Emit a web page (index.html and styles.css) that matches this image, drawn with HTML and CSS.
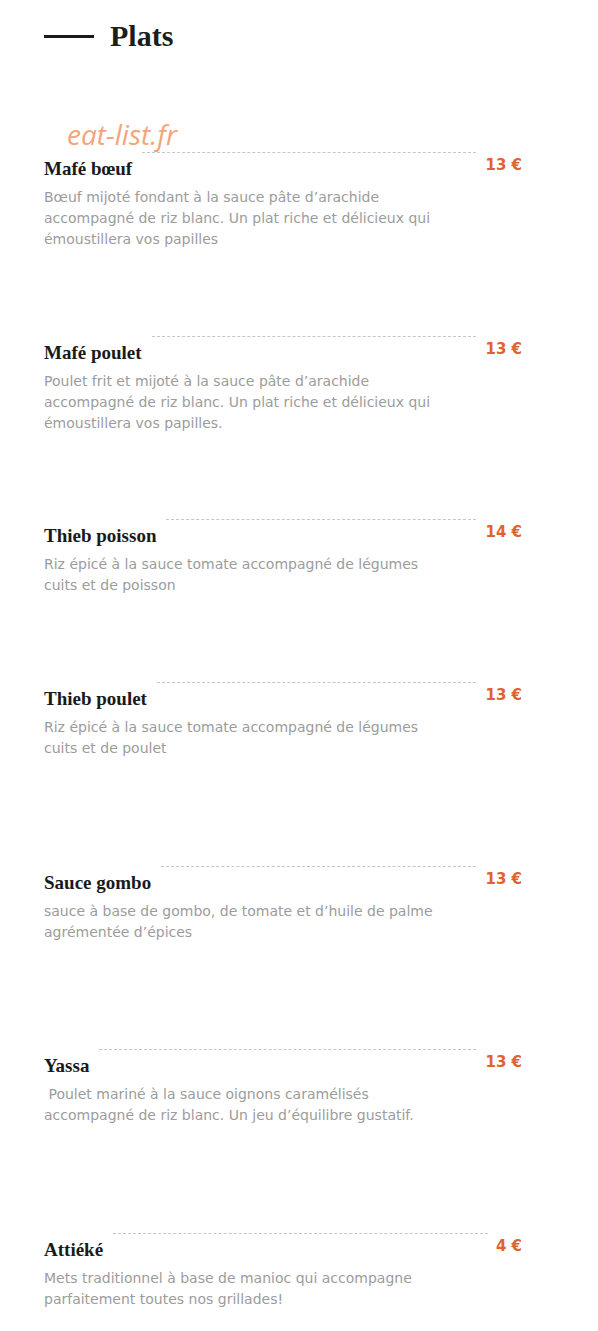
FILE: index.html
```html
<!DOCTYPE html>
<html lang="fr">
<head>
    <meta charset="UTF-8">
    <meta name="viewport" content="width=device-width, initial-scale=1.0">
    <title>Plats</title>
    <link rel="stylesheet" href="styles.css">
</head>
<body>
    <div class="menu">
        <div class="section-title">
            <span class="title-bar"></span>
            <h2>Plats</h2>
        </div>

        <div class="watermark">eat-list.fr</div>

        <div class="dish">
            <div class="dish-head">
                <h3>Mafé bœuf</h3>
                <span class="dots"></span>
                <span class="price">13 €</span>
            </div>
            <p>Bœuf mijoté fondant à la sauce pâte d’arachide accompagné de riz blanc. Un plat riche et délicieux qui émoustillera vos papilles</p>
        </div>

        <div class="dish">
            <div class="dish-head">
                <h3>Mafé poulet</h3>
                <span class="dots"></span>
                <span class="price">13 €</span>
            </div>
            <p>Poulet frit et mijoté à la sauce pâte d’arachide accompagné de riz blanc. Un plat riche et délicieux qui émoustillera vos papilles.</p>
        </div>

        <div class="dish dish-short">
            <div class="dish-head">
                <h3>Thieb poisson</h3>
                <span class="dots"></span>
                <span class="price">14 €</span>
            </div>
            <p>Riz épicé à la sauce tomate accompagné de légumes cuits et de poisson</p>
        </div>

        <div class="dish">
            <div class="dish-head">
                <h3>Thieb poulet</h3>
                <span class="dots"></span>
                <span class="price">13 €</span>
            </div>
            <p>Riz épicé à la sauce tomate accompagné de légumes cuits et de poulet</p>
        </div>

        <div class="dish">
            <div class="dish-head">
                <h3>Sauce gombo</h3>
                <span class="dots"></span>
                <span class="price">13 €</span>
            </div>
            <p>sauce à base de gombo, de tomate et d’huile de palme agrémentée d’épices</p>
        </div>

        <div class="dish">
            <div class="dish-head">
                <h3>Yassa</h3>
                <span class="dots"></span>
                <span class="price">13 €</span>
            </div>
            <p>&nbsp;Poulet mariné à la sauce oignons caramélisés accompagné de riz blanc. Un jeu d’équilibre gustatif.</p>
        </div>

        <div class="dish dish-last">
            <div class="dish-head">
                <h3>Attiéké</h3>
                <span class="dots dots-long"></span>
                <span class="price">4 €</span>
            </div>
            <p>Mets traditionnel à base de manioc qui accompagne parfaitement toutes nos grillades!</p>
        </div>
    </div>
</body>
</html>
```

FILE: styles.css
```css
body {
    margin: 0;
    padding: 0;
    background: #fff;
    font-family: "DejaVu Sans", sans-serif;
}

.menu {
    position: relative;
    width: 478px;
    padding: 18px 0 0 44px;
}

.section-title {
    display: flex;
    align-items: center;
    gap: 16px;
    height: 36px;
    margin-bottom: 98px;
}

.title-bar {
    width: 50px;
    height: 3px;
    background: #1b1b1b;
}

.section-title h2 {
    margin: 0;
    font-family: "Liberation Serif", serif;
    font-size: 30px;
    font-weight: bold;
    color: #1d1d1d;
}

.watermark {
    position: absolute;
    left: 67px;
    top: 115px;
    font-family: "Open Sans", sans-serif;
    font-style: italic;
    font-size: 28px;
    color: #f5a47a;
}

.dish {
    height: 183.5px;
}

.dish-short {
    height: 163px;
}

.dish-last {
    height: auto;
}

.dish-head {
    display: flex;
    align-items: flex-start;
}

.dish-head h3 {
    margin: 0;
    padding-top: 6px;
    font-family: "Liberation Serif", serif;
    font-size: 19px;
    font-weight: bold;
    line-height: 22px;
    color: #1a1a1a;
}

.dots {
    flex: 1;
    border-top: 1px dashed #c6c6c6;
    margin: 0 9px 0 10px;
}

.dots-long {
    margin-right: 8px;
}

.price {
    padding-top: 3px;
    font-family: "DejaVu Sans", sans-serif;
    font-size: 15px;
    font-weight: bold;
    line-height: 20px;
    color: #e0622d;
}

.dish p {
    width: 405px;
    margin: 7px 0 0;
    font-size: 14px;
    line-height: 21px;
    color: #9c9c9c;
}
```
